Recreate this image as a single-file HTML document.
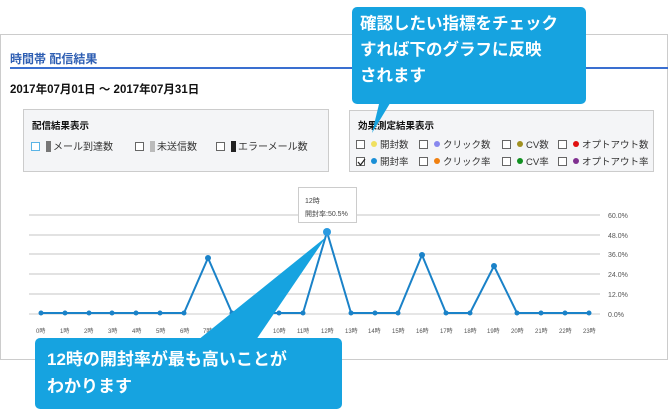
<!DOCTYPE html>
<html><head><meta charset="utf-8"><style>
*{margin:0;padding:0;box-sizing:border-box}
body{width:670px;height:420px;background:#fff;font-family:"Liberation Sans","Noto Sans CJK JP",sans-serif;position:relative;overflow:hidden;color:#111}
.panel{position:absolute;left:0;top:34px;width:668px;height:326px;border:1px solid #ccc;border-left:1px solid #ccc}
.title{position:absolute;left:10px;top:50px;font-size:12px;font-weight:bold;color:#2f5fb3}
.tline{position:absolute;left:10px;top:67px;width:658px;height:2px;background:#3a6fd0}
.date{position:absolute;left:10px;top:81px;font-size:11.5px;font-weight:bold}
.box{position:absolute;background:#f4f5f7;border:1px solid #ccc;font-size:10px}
.box .h{position:absolute;left:8px;top:8px;font-size:9.5px;font-weight:bold}
.it{position:absolute;white-space:nowrap;font-size:10px;color:#333}
.b2 .it{font-size:9.5px}
.cb{display:inline-block;width:9px;height:9px;border:1px solid #666;background:#fff;vertical-align:-1px;margin-right:6px;position:relative}
.dot{display:inline-block;width:6px;height:6px;border-radius:50%;margin-right:3px;vertical-align:1px}
.bar{display:inline-block;width:5px;height:11px;margin-right:2px;vertical-align:-2px}
.cl{position:absolute;background:#16a3e0;border-radius:5px;color:#fff;font-weight:bold}
</style></head><body>
<div class="panel"></div>
<div class="title">時間帯 配信結果</div>
<div class="tline"></div>
<div class="date">2017年07月01日 ～ 2017年07月31日</div>
<div class="box" style="left:23px;top:109px;width:306px;height:63px">
<div class="h">配信結果表示</div>
<div class="it" style="left:7px;top:28px"><span class="cb" style="border-color:#5ab4e6"></span><span class="bar" style="background:#777"></span>メール到達数</div>
<div class="it" style="left:111px;top:28px"><span class="cb"></span><span class="bar" style="background:#bbb"></span>未送信数</div>
<div class="it" style="left:192px;top:28px"><span class="cb"></span><span class="bar" style="background:#222"></span>エラーメール数</div>
</div>
<div class="box b2" style="left:349px;top:110px;width:305px;height:62px">
<div class="h" style="top:7px">効果測定結果表示</div>
<div class="it" style="left:6px;top:26px"><span class="cb"></span><span class="dot" style="background:#f0e060"></span>開封数</div>
<div class="it" style="left:69px;top:26px"><span class="cb"></span><span class="dot" style="background:#8888ee"></span>クリック数</div>
<div class="it" style="left:152px;top:26px"><span class="cb"></span><span class="dot" style="background:#a09020"></span>CV数</div>
<div class="it" style="left:208px;top:26px"><span class="cb"></span><span class="dot" style="background:#e01010"></span>オプトアウト数</div>
<div class="it" style="left:6px;top:43px"><span class="cb"><svg width="9" height="9" style="position:absolute;left:0;top:0"><path d="M1 4 L3.5 7 L8 1" stroke="#222" stroke-width="1.2" fill="none"/></svg></span><span class="dot" style="background:#1a8fd6"></span>開封率</div>
<div class="it" style="left:69px;top:43px"><span class="cb"></span><span class="dot" style="background:#f08010"></span>クリック率</div>
<div class="it" style="left:152px;top:43px"><span class="cb"></span><span class="dot" style="background:#109020"></span>CV率</div>
<div class="it" style="left:208px;top:43px"><span class="cb"></span><span class="dot" style="background:#803090"></span>オプトアウト率</div>
</div>
<svg style="position:absolute;left:0;top:0" width="670" height="420">
<g stroke="#e2e2e2" stroke-width="2">
<line x1="29" x2="600" y1="215" y2="215"/><line x1="29" x2="600" y1="235" y2="235"/>
<line x1="29" x2="600" y1="254" y2="254"/><line x1="29" x2="600" y1="274" y2="274"/>
<line x1="29" x2="600" y1="294" y2="294"/></g>
<line x1="29" x2="600" y1="314" y2="314" stroke="#ccc"/>
<g font-size="7" fill="#555" font-family="Liberation Sans,Noto Sans CJK JP,sans-serif">
<text x="608" y="218">60.0%</text><text x="608" y="238">48.0%</text><text x="608" y="257">36.0%</text>
<text x="608" y="277">24.0%</text><text x="608" y="297">12.0%</text><text x="608" y="317">0.0%</text>
<g font-size="6">
<text x="36" y="333">0時</text><text x="60" y="333">1時</text><text x="84" y="333">2時</text><text x="108" y="333">3時</text><text x="132" y="333">4時</text><text x="156" y="333">5時</text><text x="180" y="333">6時</text><text x="203" y="333">7時</text><text x="227" y="333">8時</text><text x="251" y="333">9時</text><text x="273" y="333">10時</text><text x="297" y="333">11時</text><text x="321" y="333">12時</text><text x="345" y="333">13時</text><text x="368" y="333">14時</text><text x="392" y="333">15時</text><text x="416" y="333">16時</text><text x="440" y="333">17時</text><text x="464" y="333">18時</text><text x="487" y="333">19時</text><text x="511" y="333">20時</text><text x="535" y="333">21時</text><text x="559" y="333">22時</text><text x="583" y="333">23時</text></g></g>
<polyline fill="none" stroke="#1a82c8" stroke-width="2" points="41,313 65,313 89,313 112,313 136,313 160,313 184,313 208,258 232,313 255,313 279,313 303,313 327,232 351,313 375,313 398,313 422,255 446,313 470,313 494,266 517,313 541,313 565,313 589,313"/>
<g fill="#1a82c8">
<circle cx="41" cy="313" r="2.5"/><circle cx="65" cy="313" r="2.5"/><circle cx="89" cy="313" r="2.5"/><circle cx="112" cy="313" r="2.5"/><circle cx="136" cy="313" r="2.5"/><circle cx="160" cy="313" r="2.5"/><circle cx="184" cy="313" r="2.5"/><circle cx="208" cy="258" r="3"/><circle cx="232" cy="313" r="2.5"/><circle cx="279" cy="313" r="2.5"/><circle cx="303" cy="313" r="2.5"/><circle cx="327" cy="232" r="4" fill="#2a9ae0"/><circle cx="351" cy="313" r="2.5"/><circle cx="375" cy="313" r="2.5"/><circle cx="398" cy="313" r="2.5"/><circle cx="422" cy="255" r="3"/><circle cx="446" cy="313" r="2.5"/><circle cx="470" cy="313" r="2.5"/><circle cx="494" cy="266" r="3"/><circle cx="517" cy="313" r="2.5"/><circle cx="541" cy="313" r="2.5"/><circle cx="565" cy="313" r="2.5"/><circle cx="589" cy="313" r="2.5"/></g>
<rect x="298.5" y="187.5" width="58" height="35" fill="#fff" stroke="#ccc"/>
<text x="305" y="203" font-size="7" fill="#444" font-family="Liberation Sans,Noto Sans CJK JP,sans-serif">12時</text>
<text x="305" y="216" font-size="7" fill="#444" font-family="Liberation Sans,Noto Sans CJK JP,sans-serif">開封率:50.5%</text>
<polygon points="380,100 392,100 372,133" fill="#16a3e0"/>
<polygon points="198,340 256,340 326,237" fill="#16a3e0"/>
</svg>
<div class="cl" style="left:352px;top:7px;width:234px;height:97px;font-size:16.5px;line-height:26px;padding:4px 0 0 8px">確認したい指標をチェック<br>すれば下のグラフに反映<br>されます</div>
<div class="cl" style="left:35px;top:338px;width:307px;height:71px;font-size:17px;line-height:27px;padding:8px 0 0 12px">12時の開封率が最も高いことが<br>わかります</div>
</body></html>
